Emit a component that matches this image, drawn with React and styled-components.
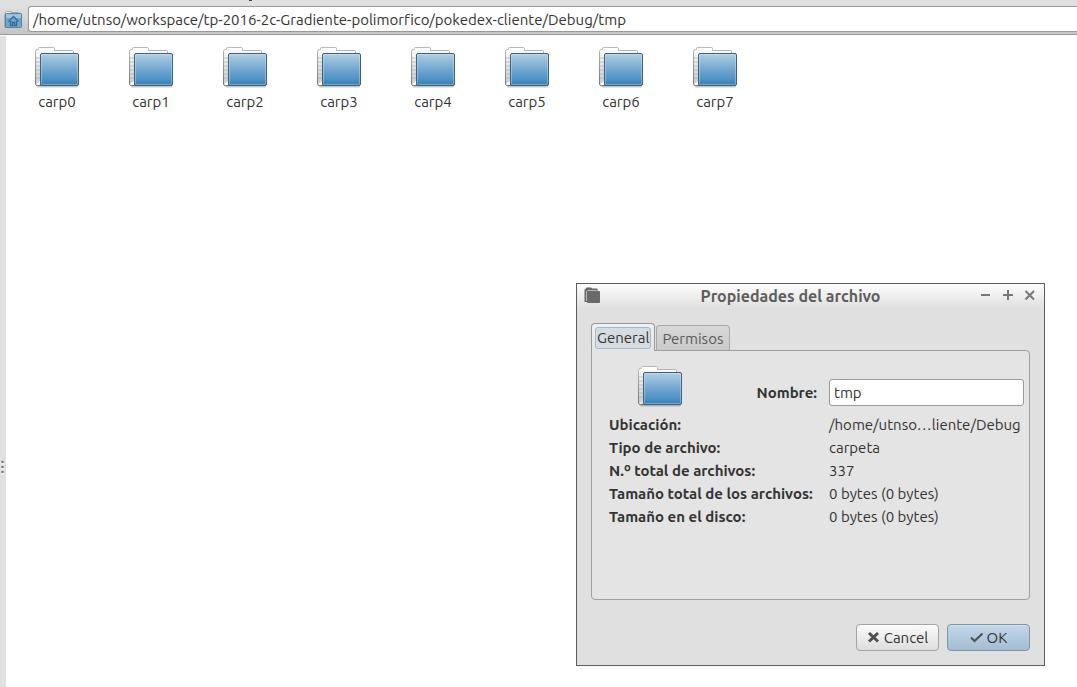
import React, { useId, useState } from "react";
import styled, { createGlobalStyle, css } from "styled-components";

const GlobalStyle = createGlobalStyle`
  * { box-sizing: border-box; }
  body {
    margin: 0;
    background: #fff;
    color: #333;
    font-family: Ubuntu, "Noto Sans", "Open Sans", sans-serif;
    font-size: 15px;
    line-height: 23px;
    font-variant-ligatures: none;
  }
  button, input { font: inherit; font-variant-ligatures: none; color: inherit; }
`;

const Window = styled.div`
  display: flex;
  flex-direction: column;
  min-height: 100vh;
  overflow: hidden;
  position: relative;
`;

const MenuEdge = styled.div`
  height: 6px;
  padding-left: 249px;
  background: #e0e0e0;
  &::before {
    content: "";
    display: block;
    width: 3px;
    height: 1px;
    background: #444;
  }
`;

const LocationBar = styled.form`
  display: flex;
  align-items: stretch;
  height: 29px;
  padding-bottom: 2px;
  background: linear-gradient(#e0e0e0, #c4c4c4);
  border-bottom: 1px solid #999;
`;

const HomeButton = styled.button`
  display: flex;
  align-items: center;
  justify-content: center;
  flex: none;
  width: 28px;
  padding: 2px 2px 0 0;
  border: 0;
  background: none;
`;

const PathInput = styled.input`
  flex: 1;
  min-width: 0;
  padding: 0 4px;
  border: 1px solid #999;
  border-right: 0;
  border-radius: 3px 0 0 3px;
  background: #fff;
  outline: none;
`;

const Body = styled.div`
  display: flex;
  flex: 1;
`;

const Splitter = styled.div`
  display: flex;
  flex-direction: column;
  justify-content: flex-end;
  flex: none;
  width: 6px;
  margin-top: 1px;
  padding-bottom: 211px;
  background: #e0e0e0;
`;

const Files = styled.ul`
  display: flex;
  flex-wrap: wrap;
  align-content: flex-start;
  flex: 1;
  margin: 0;
  padding: 10px 4px;
  list-style: none;
`;

const File = styled.li`
  display: flex;
  flex-direction: column;
  align-items: center;
  gap: 1px;
  width: 94px;
  height: 72px;
`;

const Dialog = styled.section`
  position: absolute;
  top: 283px;
  right: 32px;
  display: flex;
  flex-direction: column;
  width: 469px;
  border: 1px solid #5c5c5c;
  background: #e0e0e0;
`;

const TitleBar = styled.header`
  display: flex;
  align-items: center;
  height: 24px;
  padding: 0 7px;
  background: linear-gradient(#fdfdfd, #e0e0e0);
`;

const Title = styled.h1`
  flex: 1;
  margin: 0;
  color: #5e5e5e;
  font-size: 16px;
  font-weight: 700;
  text-align: center;
`;

const WindowButtons = styled.div`
  display: flex;
  gap: 8px;
`;

const WindowButton = styled.button`
  display: flex;
  padding: 0;
  border: 0;
  background: none;
  color: #777;
`;

const Tabs = styled.div`
  display: flex;
  align-items: flex-end;
  gap: 1px;
  height: 27px;
  margin: 15px 14px 0;
`;

const Tab = styled.button`
  position: relative;
  z-index: 1;
  height: 25px;
  padding: 0 3px;
  border: 1px solid #a8a8a8;
  border-bottom: 0;
  border-radius: 4px 4px 0 0;
  background: linear-gradient(#d8d8d8, #cacaca);
  color: #5a5a5a;
  white-space: nowrap;
  ${(p) => p.$active && css`
    height: 28px;
    margin-bottom: -1px;
    border-color: #999;
    background: linear-gradient(#f0f0f0, #e4e4e4);
    color: #333;
  `}
`;

const TabLabel = styled.span`
  display: block;
  padding: 1px 3px 0 2px;
  ${(p) => p.$active && css`
    padding: 0 1px;
    border: 1px solid #9dbbd6;
    border-radius: 3px;
    background: #d5dde3;
    line-height: 20px;
  `}
`;

const Panel = styled.div`
  display: flex;
  flex-direction: column;
  height: 250px;
  margin: 0 14px;
  padding: 13px 5px 0 17px;
  border: 1px solid #a0a0a0;
  border-radius: 0 4px 4px 4px;
  background: #e4e4e4;
`;

const NameRow = styled.div`
  display: grid;
  grid-template-columns: 102px 106px 1fr;
  align-items: center;
  height: 49px;
`;

const NameIcon = styled.div`
  display: flex;
  align-self: start;
  justify-content: center;
`;

const NameLabel = styled.label`
  padding-top: 8px;
  font-weight: 700;
  text-align: right;
`;

const NameInput = styled.input`
  min-width: 0;
  height: 27px;
  margin: 8px 0 0 12px;
  padding: 0 4px;
  border: 1px solid #999;
  border-radius: 3px;
  background: #fff;
  outline: none;
`;

const Details = styled.dl`
  display: grid;
  grid-template-columns: 208px 1fr;
  column-gap: 12px;
  margin: 0;
  white-space: nowrap;
`;

const Term = styled.dt`
  font-weight: 700;
`;

const Value = styled.dd`
  margin: 0;
`;

const Actions = styled.footer`
  display: flex;
  justify-content: flex-end;
  gap: 8px;
  padding: 24px 14px 14px;
`;

const ActionButton = styled.button`
  display: flex;
  align-items: center;
  justify-content: center;
  gap: 3px;
  width: 83px;
  height: 27px;
  padding: 0;
  border: 1px solid ${(p) => (p.$primary ? "#7f94a6" : "#a3a3a3")};
  border-radius: 4px;
  background: ${(p) => (p.$primary ? "linear-gradient(#c4d7e7, #a2bdd5)" : "linear-gradient(#fafafa, #dedede)")};
  box-shadow: inset 0 1px ${(p) => (p.$primary ? "#d4e2ee" : "#fff")};
`;

function FolderIcon() {
  const id = useId();
  return (
    <svg width="48" height="44" viewBox="0 0 48 44" aria-hidden="true">
      <defs>
        <linearGradient id={`${id}f`} x2="0" y2="1">
          <stop offset="0" stopColor="#b4cfe3" />
          <stop offset=".5" stopColor="#71a7d0" />
          <stop offset=".8" stopColor="#4f93c5" />
          <stop offset="1" stopColor="#357cae" />
        </linearGradient>
        <linearGradient id={`${id}b`} x2="0" y2="1">
          <stop offset="0" stopColor="#fff" />
          <stop offset="1" stopColor="#c8c8c8" />
        </linearGradient>
        <linearGradient id={`${id}o`} x2="0" y2="1">
          <stop offset="0" stopColor="#b9b9b9" />
          <stop offset="1" stopColor="#777" />
        </linearGradient>
      </defs>
      <path d="M5 41.500H44" stroke="#000" strokeOpacity=".22" strokeWidth="2" strokeLinecap="round" />
      <path d="M2.500 39.500V6.500Q2.500 4.500 4.500 4.500H5.500V3.500Q5.500 2.500 6.500 2.500H20.500Q21.500 2.500 21.500 3.500V5.500H39.500Q40.500 5.500 40.500 6.500V10M2.500 39.500Q2.500 40.500 4.500 40.500H9" fill={`url(#${id}b)`} stroke={`url(#${id}o)`} />
      <path d="M3 13H7M3 17H7M3 21H7M3 25H7M3 29H7M3 33H7" stroke="#999" strokeOpacity=".25" strokeWidth="2" />
      <rect x="7.500" y="8.500" width="38" height="32" rx="1.500" fill={`url(#${id}f)`} stroke="#3d607c" />
      <rect x="8.500" y="9.500" width="36" height="30" rx=".5" fill="none" stroke="#e2f0fa" strokeOpacity=".35" />
    </svg>
  );
}

function HomeFolderIcon() {
  return (
    <svg width="20" height="20" viewBox="0 0 20 20" aria-hidden="true">
      <path d="M1.500 16.500V4.500Q1.500 3.500 2.500 3.500V2.500Q2.500 1.500 3.500 1.500H8.500V2.500H15.500Q16.500 2.500 16.500 4" fill="#eee" stroke="#aaa" />
      <path d="M1.500 16.500Q1.500 17.500 3.500 17.500" fill="none" stroke="#888" />
      <rect x="2.500" y="3.500" width="16" height="14" rx="1" fill="#70a4cb" stroke="#5282a8" />
      <path d="M3 4H18V8H3Z" fill="#a1c2db" />
      <path d="M5.500 11.500L10.500 6.500L15.500 11.500M7.500 11V15.500H9.500V12.500H11.500V15.500H13.500V11" fill="none" stroke="#376a91" strokeWidth="1.300" />
    </svg>
  );
}

function DialogIcon() {
  return (
    <svg width="18" height="18" viewBox="0 0 18 18" aria-hidden="true">
      <path d="M.5 14.500V3Q.5 1.500 2 1.500L2.500 .5H7L8 1.500H12.500Q14 1.500 14 3V5H4V15H2Q.5 15 .5 14.500Z" fill="#666" />
      <path d="M2.500 14V5Q2.500 3.500 4 3.500H14" fill="none" stroke="#b5b5b5" />
      <rect x="3" y="4" width="13" height="12" rx="1" fill="#696969" />
    </svg>
  );
}

const windowGlyphs = {
  Minimizar: "M2 6H11",
  Maximizar: "M2 6H12M7 1V11",
  Cerrar: "M2.500 2L11 10.500M11 2L2.500 10.500",
};

const folders = ["carp0", "carp1", "carp2", "carp3", "carp4", "carp5", "carp6", "carp7"];

const details = [
  ["Ubicación:", "/home/utnso…liente/Debug"],
  ["Tipo de archivo:", "carpeta"],
  ["N.º total de archivos:", "337"],
  ["Tamaño total de los archivos:", "0 bytes (0 bytes)"],
  ["Tamaño en el disco:", "0 bytes (0 bytes)"],
];

export default function App() {
  const [tab, setTab] = useState("General");
  return (
    <>
      <GlobalStyle />
      <Window>
        <MenuEdge />
        <LocationBar onSubmit={(e) => e.preventDefault()}>
          <HomeButton type="button" aria-label="Carpeta personal"><HomeFolderIcon /></HomeButton>
          <PathInput aria-label="Ruta" defaultValue="/home/utnso/workspace/tp-2016-2c-Gradiente-polimorfico/pokedex-cliente/Debug/tmp" />
        </LocationBar>
        <Body>
          <Splitter>
            <svg width="6" height="16" viewBox="0 0 6 16" aria-hidden="true">
              {[2, 7, 12].map((y) => (
                <g key={y}>
                  <circle cx="2.500" cy={y + 1} r="1.500" fill="#fff" />
                  <circle cx="2.500" cy={y} r="1.300" fill="#777" />
                </g>
              ))}
            </svg>
          </Splitter>
          <Files>
            {folders.map((name) => (
              <File key={name}><FolderIcon />{name}</File>
            ))}
          </Files>
        </Body>
        <Dialog role="dialog" aria-labelledby="dialog-title">
          <TitleBar>
            <DialogIcon />
            <Title id="dialog-title">Propiedades del archivo</Title>
            <WindowButtons>
              {Object.entries(windowGlyphs).map(([label, d]) => (
                <WindowButton key={label} type="button" aria-label={label}>
                  <svg width="14" height="14" viewBox="0 0 14 14" aria-hidden="true">
                    <path d={d} stroke="currentColor" strokeWidth="2" />
                  </svg>
                </WindowButton>
              ))}
            </WindowButtons>
          </TitleBar>
          <Tabs role="tablist">
            {["General", "Permisos"].map((name) => (
              <Tab key={name} type="button" role="tab" aria-selected={tab === name} $active={tab === name} onClick={() => setTab(name)}>
                <TabLabel $active={tab === name}>{name}</TabLabel>
              </Tab>
            ))}
          </Tabs>
          <Panel role="tabpanel">
            <NameRow>
              <NameIcon><FolderIcon /></NameIcon>
              <NameLabel htmlFor="file-name">Nombre:</NameLabel>
              <NameInput id="file-name" defaultValue="tmp" />
            </NameRow>
            <Details>
              {details.map(([term, value]) => (
                <React.Fragment key={term}>
                  <Term>{term}</Term>
                  <Value>{value}</Value>
                </React.Fragment>
              ))}
            </Details>
          </Panel>
          <Actions>
            <ActionButton type="button">
              <svg width="14" height="14" viewBox="0 0 14 14" aria-hidden="true">
                <path d="M2 2L11 10.500M11 2L2 10.500" stroke="#505050" strokeWidth="3" />
              </svg>
              Cancel
            </ActionButton>
            <ActionButton type="button" $primary>
              <svg width="14" height="14" viewBox="0 0 14 14" aria-hidden="true">
                <path d="M1 6.500L4.500 10L12.500 2.500" fill="none" stroke="#505050" strokeWidth="2" />
              </svg>
              OK
            </ActionButton>
          </Actions>
        </Dialog>
      </Window>
    </>
  );
}
